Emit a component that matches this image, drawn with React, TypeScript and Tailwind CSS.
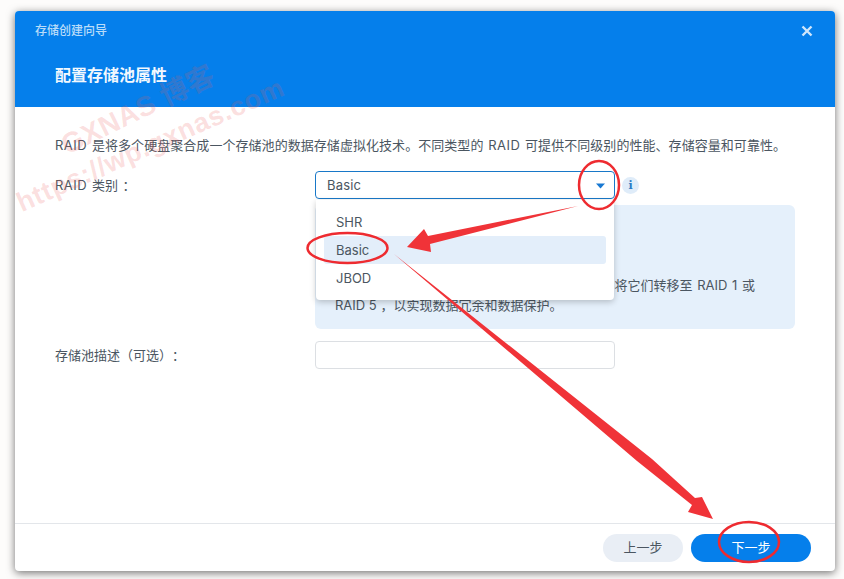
import React from 'react';

const font = "font-['Inter','Noto_Sans_CJK_SC',sans-serif] [text-spacing-trim:space-all]";

// red marks drawn on top of the screenshot
const Annotations: React.FC = () => (
    <svg className="absolute left-0 top-0 pointer-events-none" width="844" height="579" viewBox="0 0 844 579">
        <ellipse cx="599" cy="185" rx="20" ry="24" fill="none" stroke="#ee2b30" strokeWidth="2.5" />
        <ellipse cx="347.5" cy="248" rx="40" ry="15" fill="none" stroke="#ee2b30" strokeWidth="2.5" />
        <ellipse cx="749" cy="542" rx="30" ry="20" fill="none" stroke="#ee2b30" strokeWidth="2.5" />
        <polygon points="578,206 428,236 424,229 407,247 431,252 430,244" fill="#f03338" />
        <polygon points="394,254 652,459 695,498 702,497 713,519 688,512 692,505 637,461" fill="#f03338" />
    </svg>
);

const Watermark: React.FC = () => (
    <div className="absolute left-0 top-0 pointer-events-none font-['Liberation_Sans','Noto_Sans_CJK_SC',sans-serif]">
        <div className="absolute left-[63px] top-[130px] whitespace-nowrap origin-left rotate-[-26deg] text-[28px] leading-[34px] font-bold tracking-[0.5px] text-[rgba(235,90,90,0.2)]">
            GXNAS 博客
        </div>
        <div className="absolute left-[18px] top-[188px] whitespace-nowrap origin-left rotate-[-24deg] text-[27px] leading-[32px] font-bold tracking-[0.7px] text-[rgba(235,90,90,0.2)]">
            https://wp.gxnas.com
        </div>
    </div>
);

export default function App() {
    return (
        <div className={`relative w-[844px] h-[579px] overflow-hidden bg-[#fdfcfb] pl-[15px] pt-[11px] ${font}`}>
            <div className="relative flex flex-col w-[820px] h-[560px] bg-white rounded-[4px] overflow-hidden shadow-[0_2px_9px_rgba(0,0,0,0.55)]">
                {/* Header */}
                <div className="h-[96px] shrink-0 bg-[#057feb] pl-5 pr-[22px]">
                    <div className="flex items-center justify-between h-10">
                        <span className="text-[12px] font-medium text-[#b9dcf9]">存储创建向导</span>
                        <svg width="12" height="12" viewBox="0 0 12 12">
                            <path d="M1.5 1.5 L10.5 10.5 M10.5 1.5 L1.5 10.5" stroke="#cfe6fb" strokeWidth="2.4" />
                        </svg>
                    </div>
                    <div className="pl-5 mt-[10px] text-[16px] leading-[28px] font-bold text-[#f2f8fe]">配置存储池属性</div>
                </div>

                {/* Body */}
                <div className="flex-1 px-10 pt-[28px] text-[13px] text-[#4b5661]">
                    <p className="leading-5 whitespace-nowrap tracking-[0.05px] [word-spacing:1px]">
                        <span className="tracking-[0.5px]">RAID</span> 是将多个硬盘聚合成一个存储池的数据存储虚拟化技术。不同类型的 <span className="tracking-[0.5px]">RAID</span> 可提供不同级别的性能、存储容量和可靠性。
                    </p>

                    <div className="flex mt-4">
                        <div className="w-[260px] leading-7 [word-spacing:1px]">
                            <span className="tracking-[0.5px]">RAID</span> 类别 ：
                        </div>
                        <div className="w-[480px]">
                            <div className="flex items-center">
                                <div className="flex items-center justify-between w-[300px] h-7 pl-[11px] pr-[9px] pt-px border border-[#1878c8] rounded-[4px]">
                                    <span className="tracking-[0.2px]">Basic</span>
                                    <svg width="9" height="6" viewBox="0 0 9 6">
                                        <path d="M0 0.5 H9 L4.5 5.5 Z" fill="#1878d2" />
                                    </svg>
                                </div>
                                <div className="flex items-center justify-center w-[17px] h-[17px] ml-[7px] rounded-full bg-[#dfecf9]">
                                    <span className="text-[11px] leading-none font-bold text-[#2a7bc4] font-['DejaVu_Serif',serif]">i</span>
                                </div>
                            </div>
                            <div className="flex flex-col justify-end h-[124px] mt-[6px] pl-5 pr-10 pb-[14px] bg-[#e5f0fb] rounded-[6px] leading-5">
                                <p className="text-right whitespace-nowrap [word-spacing:1px]">将它们转移至 RAID 1 或</p>
                                <p className="whitespace-nowrap">RAID 5 ，以实现数据冗余和数据保护。</p>
                            </div>
                        </div>
                    </div>

                    <div className="flex mt-3">
                        <div className="w-[260px] leading-7">存储池描述（可选）：</div>
                        <div className="w-[300px] h-7 border border-[#dcdfe3] rounded-[4px]" />
                    </div>
                </div>

                {/* Footer */}
                <div className="flex justify-end gap-2 h-[48px] shrink-0 pt-[10px] pr-6 border-t border-[#e3e6ea] text-[13px]">
                    <button className="w-20 h-7 rounded-full bg-[#e9eef5] text-[#4b5661]">上一步</button>
                    <button className="w-[120px] h-7 rounded-full bg-[#057feb] text-white">下一步</button>
                </div>

                {/* Open select menu */}
                <div className="absolute left-[301px] top-[189px] w-[298px] h-[100px] py-2 px-2 bg-white rounded-b-[4px] shadow-[0_2px_6px_rgba(0,0,0,0.22)] text-[13px] text-[#4b5661]">
                    <div className="h-7 pl-3 leading-7">SHR</div>
                    <div className="h-7 pl-3 leading-7 bg-[#e3eefa] rounded-[3px]">Basic</div>
                    <div className="h-7 pl-3 leading-7">JBOD</div>
                </div>
            </div>
            <Watermark />
            <Annotations />
        </div>
    );
}
